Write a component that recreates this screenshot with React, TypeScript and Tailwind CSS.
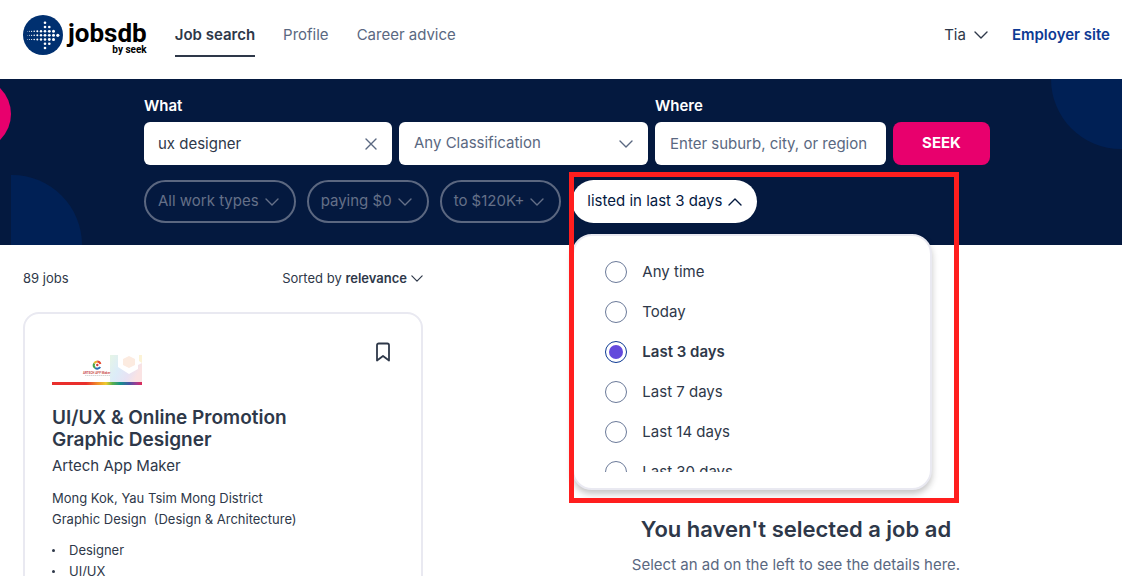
import { useState } from 'react';

const navLinks = ['Job search', 'Profile', 'Career advice'];
const filters = ['All work types', 'paying $0', 'to $120K+'];
const listedOptions = ['Any time', 'Today', 'Last 3 days', 'Last 7 days', 'Last 14 days', 'Last 30 days'];

// [x, y, radius] of each dot in the arrow
const logoDots = [
  [22, 7.7, 1.3], [22, 12, 1.3], [22, 16.3, 1.3], [22, 20.3, 1.4], [22, 24.5, 1.3], [22, 28.8, 1.3], [22, 33, 1.3],
  [26.3, 12, 1.3], [26.3, 16.3, 1.4], [26.3, 20.3, 1.4], [26.3, 24.5, 1.4], [26.3, 28.8, 1.3],
  [30.5, 16.3, 1.5], [30.5, 20.3, 1.5], [30.5, 24.5, 1.5],
  [34.8, 20.3, 1.6],
  [18, 16.3, 1.2], [18, 20.3, 1.2], [18, 24.5, 1.2],
  [14.3, 16.3, 1], [14.3, 20.3, 1], [14.3, 24.5, 1],
  [11.2, 16.3, 0.8], [11.2, 20.3, 0.8], [11.2, 24.5, 0.8],
  [8.6, 16.3, 0.6], [8.6, 20.3, 0.6], [8.6, 24.5, 0.6],
  [6.4, 16.3, 0.5], [6.4, 20.3, 0.5], [6.4, 24.5, 0.5],
  [4.4, 16.3, 0.4], [4.4, 20.3, 0.4], [4.4, 24.5, 0.4],
];

function Chevron({ className = 'h-2 w-3.5', up = false }: { className?: string; up?: boolean }) {
  return (
    <svg className={`shrink-0 ${className}`} viewBox="0 0 14 8" fill="none" stroke="currentColor" strokeWidth={1.4} strokeLinecap="round" strokeLinejoin="round">
      <path d={up ? 'M1 7L7 1L13 7' : 'M1 1L7 7L13 1'} />
    </svg>
  );
}

function Logo() {
  return (
    <a href="#" className="flex items-start gap-[5px] text-black">
      <svg className="h-10 w-10" viewBox="0 0 40 40">
        <circle cx="20" cy="20" r="20" fill="#003070" />
        {logoDots.map(([cx, cy, r], i) => (
          <circle key={i} cx={cx} cy={cy} r={r} fill="#fff" />
        ))}
      </svg>
      <span className="flex flex-col items-end pt-2 font-['Roboto',sans-serif] font-bold">
        <span className="text-[26px] leading-[21px]">jobsdb</span>
        <span className="text-[10px] leading-[11px]">by seek</span>
      </span>
    </a>
  );
}

function CompanyLogo() {
  return (
    <svg className="h-[30px] w-[90px]" viewBox="0 0 90 30" role="img" aria-label="Artech App Maker">
      <defs>
        <linearGradient id="stripe">
          <stop offset="0.38" stopColor="#e92f2c" />
          <stop offset="0.5" stopColor="#f08a2b" />
          <stop offset="0.6" stopColor="#eecb2e" />
          <stop offset="0.67" stopColor="#5cb04a" />
          <stop offset="0.76" stopColor="#14908c" />
          <stop offset="0.86" stopColor="#4a55a5" />
          <stop offset="0.94" stopColor="#a33a8f" />
          <stop offset="1" stopColor="#e02b55" />
        </linearGradient>
        <linearGradient id="hexagon" x1="0" x2="1" y1="0" y2="0.4">
          <stop offset="0" stopColor="#e6f5e6" />
          <stop offset="0.4" stopColor="#dcecf8" />
          <stop offset="0.75" stopColor="#e8e2f3" />
          <stop offset="1" stopColor="#fae3e3" />
        </linearGradient>
      </defs>
      <path d="M58 0h8v12l11 7l9-5v-4l4-2v19H58z" fill="url(#hexagon)" />
      <path d="M77 1l6 3v6l-6 3l-6-3V4z" fill="#fcebe0" />
      <path d="M87 0h3v8l-3-2z" fill="#fcf3d6" />
      <g fill="none" strokeWidth="2">
        <path d="M42.200 8.500a3.500 3.500 0 0 1 3-2" stroke="#e8b52c" />
        <path d="M45.200 6.500a3.500 3.500 0 0 1 3.200 2.500" stroke="#e5472d" />
        <path d="M42.200 8.500a3.500 3.500 0 0 0 1 4.500" stroke="#4aa44c" />
        <path d="M43.200 13a3.500 3.500 0 0 0 5-1" stroke="#2b6fb3" />
      </g>
      <circle cx="45.3" cy="10" r="1.2" fill="#d23b39" />
      <text x="31" y="18.500" fontSize="3" fontWeight="700" fill="#c94f4f" fontFamily="Roboto, sans-serif">ARTECH APP Maker</text>
      <path d="M33 20.500h25" stroke="#b9b9b9" strokeWidth="0.6" strokeDasharray="1.500 0.500" />
      <path d="M0 27h90v3H0z" fill="url(#stripe)" />
    </svg>
  );
}

export default function App() {
  const [keywords, setKeywords] = useState('ux designer');
  const [listed, setListed] = useState('Last 3 days');
  const [open, setOpen] = useState(true);

  return (
    <div className="h-screen overflow-hidden bg-white font-['Inter','Liberation_Sans',sans-serif] text-[15px] text-[#2e3849]">
      {/* Header */}
      <header className="flex h-[79px] items-start justify-between pr-3 pl-[23px] pt-[15px]">
        <div className="flex items-start">
          <Logo />
          <nav className="ml-7 flex gap-7 pt-2">
            {navLinks.map((link, i) => (
              <a
                key={link}
                href="#"
                className={i === 0 ? 'border-b-2 border-[#2e3849] pb-2 leading-6 font-semibold' : 'leading-6 text-[#5a6881]'}
              >
                {link}
              </a>
            ))}
          </nav>
        </div>
        <div className="flex items-center gap-6 pt-2 leading-6">
          <button type="button" className="flex items-center gap-2">
            Tia
            <Chevron />
          </button>
          <a href="#" className="font-semibold text-[#0d3a94]">Employer site</a>
        </div>
      </header>

      {/* Search */}
      <section className="relative z-10 bg-[#04193f]">
        <div className="absolute inset-0 overflow-hidden">
          <div className="absolute -left-[61px] -top-px h-[72px] w-[72px] rounded-full bg-[#e8006d]" />
          <div className="absolute bottom-0 left-[11px] h-[70px] w-[71px] rounded-tr-full bg-[#002055]" />
          <div className="absolute right-0 top-0 h-[70px] w-[71px] rounded-bl-full bg-[#002055]" />
        </div>
        <form className="relative pr-[132px] pb-[22px] pl-36 pt-[15px]" onSubmit={(e) => e.preventDefault()}>
          <div className="grid grid-cols-[248fr_249fr_231fr_97fr] items-end gap-[7px]">
            <div>
              <label htmlFor="what" className="block pb-[5px] leading-[23px] font-semibold text-white">What</label>
              <div className="flex h-[43px] items-center rounded-md bg-white px-3.5">
                <input
                  id="what"
                  className="h-full w-full min-w-0 outline-none"
                  value={keywords}
                  onChange={(e) => setKeywords(e.target.value)}
                />
                <button type="button" aria-label="Clear keywords" onClick={() => setKeywords('')} className="text-[#5a6881]">
                  <svg className="h-3.5 w-3.5" viewBox="0 0 14 14" fill="none" stroke="currentColor" strokeWidth={1.4} strokeLinecap="round">
                    <path d="M2 2l10 10M12 2L2 12" />
                  </svg>
                </button>
              </div>
            </div>
            <button type="button" className="flex h-[43px] items-center justify-between rounded-md bg-white px-[15px] text-[#5a6881]">
              Any Classification
              <Chevron />
            </button>
            <div>
              <label htmlFor="where" className="block pb-[5px] leading-[23px] font-semibold text-white">Where</label>
              <input
                id="where"
                className="block h-[43px] w-full rounded-md bg-white px-[15px] outline-none placeholder:text-[#5a6881]"
                placeholder="Enter suburb, city, or region"
              />
            </div>
            <button type="submit" className="h-[43px] rounded-lg bg-[#e8006d] font-bold text-white">SEEK</button>
          </div>

          <div className="mt-[15px] flex gap-[11px]">
            {filters.map((label) => (
              <button
                key={label}
                type="button"
                className="flex h-[43px] items-center gap-1.5 rounded-full border-2 border-[#5b6780] pr-[15px] pl-3 whitespace-nowrap text-[#657088]"
              >
                {label}
                <Chevron />
              </button>
            ))}
            <div className="relative">
              <button
                type="button"
                aria-expanded={open}
                onClick={() => setOpen(!open)}
                className="flex h-[43px] items-center gap-1.5 rounded-full bg-white px-[15px] whitespace-nowrap text-[#04193f]"
              >
                listed in last 3 days
                <Chevron up={open} />
              </button>
              {open && (
                <div className="absolute left-0 top-[54px] w-[360px] rounded-[20px] border-2 border-[#e9e9f1] bg-white py-4 shadow-[0_4px_6px_rgba(28,28,28,0.25)]">
                  <fieldset aria-label="Listed in" className="h-[220px] overflow-hidden pl-[31px]">
                    {listedOptions.map((option) => (
                      <label key={option} className="flex h-10 items-center gap-[15px]">
                        <input
                          type="radio"
                          name="listed"
                          checked={listed === option}
                          onChange={() => setListed(option)}
                          className="h-[22px] w-[22px] appearance-none rounded-full border border-[#6b7a99] p-[3px] before:block before:h-full before:rounded-full checked:border-[#0d3a94] checked:before:bg-[#6349dc]"
                        />
                        <span className={listed === option ? 'font-semibold' : ''}>{option}</span>
                      </label>
                    ))}
                  </fieldset>
                </div>
              )}
              {/* Highlight frame */}
              <div className="pointer-events-none absolute -left-[3px] -top-2 h-[331px] w-[390px] border-[5px] border-[#ff1e1e]" />
            </div>
          </div>
        </form>
      </section>

      {/* Results */}
      <main className="flex pl-[23px] pr-3">
        <div className="w-[400px] shrink-0 pt-[23px] text-[13px] leading-[21px]">
          <div className="flex justify-between">
            <p>89 jobs</p>
            <button type="button" className="flex items-center gap-1">
              <span>Sorted by <strong className="font-semibold">relevance</strong></span>
              <Chevron className="h-[7px] w-3" />
            </button>
          </div>
          <article className="mt-[23px] rounded-2xl border-2 border-[#e9e9f1] px-[27px] pt-7 pb-8">
            <div className="flex items-start justify-between">
              <div className="pt-[13px]">
                <CompanyLogo />
              </div>
              <button type="button" aria-label="Save job" className="pr-[3px]">
                <svg className="h-5 w-4" viewBox="0 0 16 20" fill="none" stroke="currentColor" strokeWidth={1.8} strokeLinejoin="round">
                  <path d="M2 18.500V3.200A1.700 1.700 0 0 1 3.700 1.500H12.300A1.700 1.700 0 0 1 14 3.200V18.500L8 14z" />
                </svg>
              </button>
            </div>
            <h3 className="mt-[22px] text-[19px] leading-[22px] font-semibold">
              <a href="#">UI/UX &amp; Online Promotion<br />Graphic Designer</a>
            </h3>
            <p className="mt-[3px] text-[15px] leading-6">
              <a href="#">Artech App Maker</a>
            </p>
            <p className="mt-[10px]">Mong Kok, Yau Tsim Mong District</p>
            <p>Graphic Design&nbsp; (Design &amp; Architecture)</p>
            <ul className="mt-[10px]">
              {['Designer', 'UI/UX', 'Online Promotion'].map((point) => (
                <li key={point} className="flex items-center gap-3.5">
                  <span className="h-[3px] w-[3px] rounded-full bg-current" />
                  {point}
                </li>
              ))}
            </ul>
          </article>
        </div>
        <div className="flex-1 pl-[59px] pt-[268px] text-center">
          <h2 className="text-[22px] leading-8 font-semibold">You haven't selected a job ad</h2>
          <p className="mt-2 leading-6 text-[#5a6881]">Select an ad on the left to see the details here.</p>
        </div>
      </main>
    </div>
  );
}
